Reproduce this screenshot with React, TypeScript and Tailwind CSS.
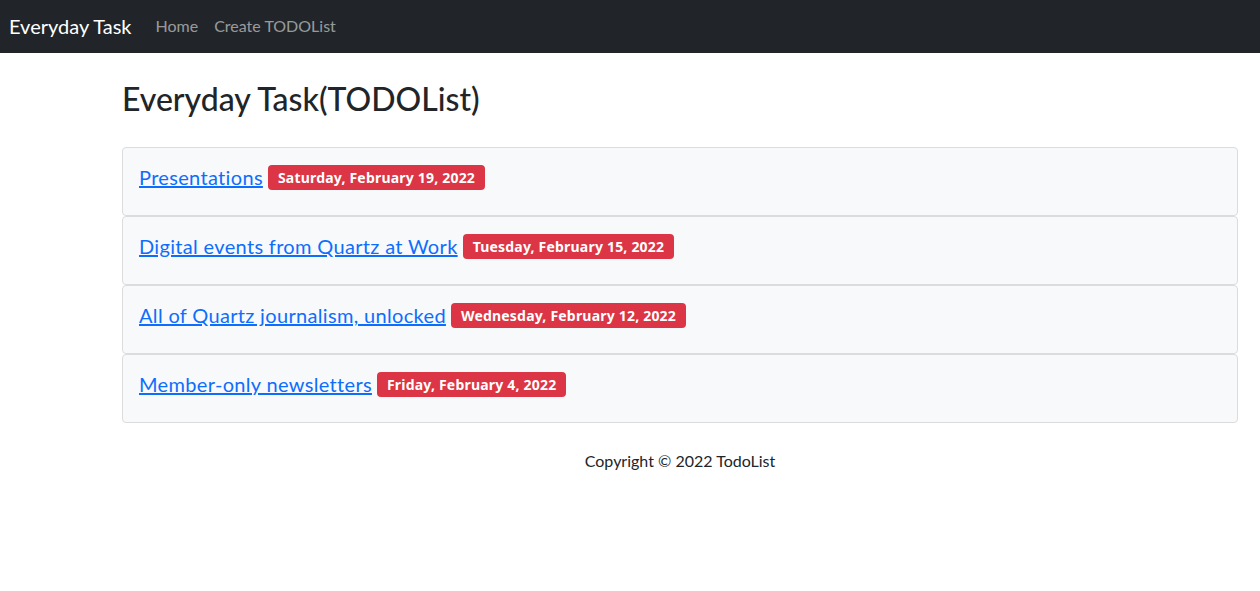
import React from "react";

const tasks = [
  { title: "Presentations", date: "Saturday, February 19, 2022" },
  { title: "Digital events from Quartz at Work", date: "Tuesday, February 15, 2022" },
  { title: "All of Quartz journalism, unlocked", date: "Wednesday, February 12, 2022" },
  { title: "Member-only newsletters", date: "Friday, February 4, 2022" },
];

export default function App() {
  return (
    <div className="min-h-screen bg-white text-[#212529] font-['Lato',sans-serif]">
      <nav className="h-[53px] bg-[#212529] flex items-center px-[9px] pb-[1px]">
        <a href="#" className="text-white text-[20px] mr-[24px]">Everyday Task</a>
        <a href="#" className="text-[rgba(255,255,255,0.55)] text-[16px] mr-[16px]">Home</a>
        <a href="#" className="text-[rgba(255,255,255,0.55)] text-[16px]">Create TODOList</a>
      </nav>

      <main className="ml-[122px] w-[1116px] pt-[27px]">
        <h1 className="text-[32px] font-medium leading-[38px] mb-[29px]">Everyday Task(TODOList)</h1>

        <div className="flex flex-col">
          {tasks.map((t) => (
            <div
              key={t.title}
              className="h-[69px] bg-[#f8f9fa] border border-[#dcdcdc] rounded-[4px] px-[16px] pt-[14px] flex items-start"
            >
              <div className="flex items-center h-[30px]">
                <a href="#" className="text-[#0d6efd] text-[20px] tracking-[0.33px] underline leading-[30px]">{t.title}</a>
                <span className="ml-[5px] mt-[1px] bg-[#dc3545] text-white text-[14px] font-bold rounded-[4px] px-[10px] h-[25px] flex items-center font-['Noto_Sans',sans-serif] tracking-[0.2px]">
                  {t.date}
                </span>
              </div>
            </div>
          ))}
        </div>

        <footer className="text-center text-[16px] mt-[26px]">Copyright © 2022 TodoList</footer>
      </main>
    </div>
  );
}
